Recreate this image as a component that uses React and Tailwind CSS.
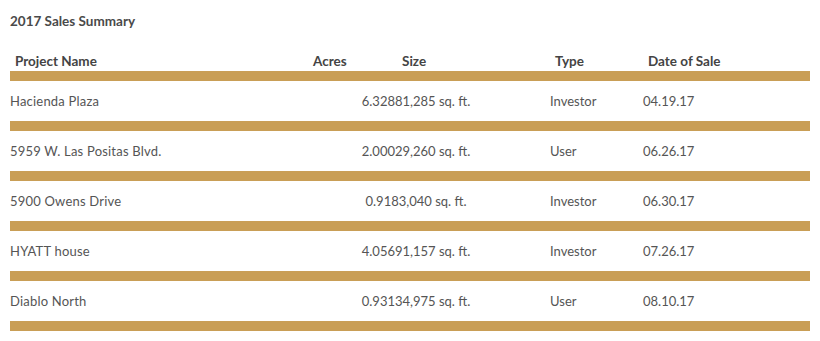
const ROWS = [
  { name: "Hacienda Plaza", size: "6.32881,285 sq. ft.", type: "Investor", date: "04.19.17" },
  { name: "5959 W. Las Positas Blvd.", size: "2.00029,260 sq. ft.", type: "User", date: "06.26.17" },
  { name: "5900 Owens Drive", size: "0.9183,040 sq. ft.", type: "Investor", date: "06.30.17" },
  { name: "HYATT house", size: "4.05691,157 sq. ft.", type: "Investor", date: "07.26.17" },
  { name: "Diablo North", size: "0.93134,975 sq. ft.", type: "User", date: "08.10.17" },
];

function Bar() {
  return <div className="h-[10px] bg-[#c99e56]" />;
}

export default function App() {
  return (
    <div className="w-[820px] h-[341px] bg-white px-[10px] font-[Lato,sans-serif] text-[13px]">
      {/* Title */}
      <div className="h-[41px] flex items-center pt-[2px] font-bold text-[13.5px] text-[#4a4a4a]">2017 Sales Summary</div>

      {/* Column headings */}
      <div className="h-[30px] flex items-end pb-[3px] leading-[14px] font-bold text-[13.5px] text-[#444]">
        <div className="w-[303px] pl-[5px]">Project Name</div>
        <div className="w-[89px]">Acres</div>
        <div className="w-[153px]">Size</div>
        <div className="w-[93px]">Type</div>
        <div>Date of Sale</div>
      </div>
      <Bar />

      {ROWS.map((r) => (
        <div key={r.name}>
          <div className="h-[40px] flex items-center pt-[2px] text-[#555]">
            <div className="w-[300px] tracking-[0.2px]">{r.name}</div>
            <div className="w-[212px] text-center">{r.size}</div>
            <div className="w-[28px]" />
            <div className="w-[93px]">{r.type}</div>
            <div>{r.date}</div>
          </div>
          <Bar />
        </div>
      ))}
    </div>
  );
}
